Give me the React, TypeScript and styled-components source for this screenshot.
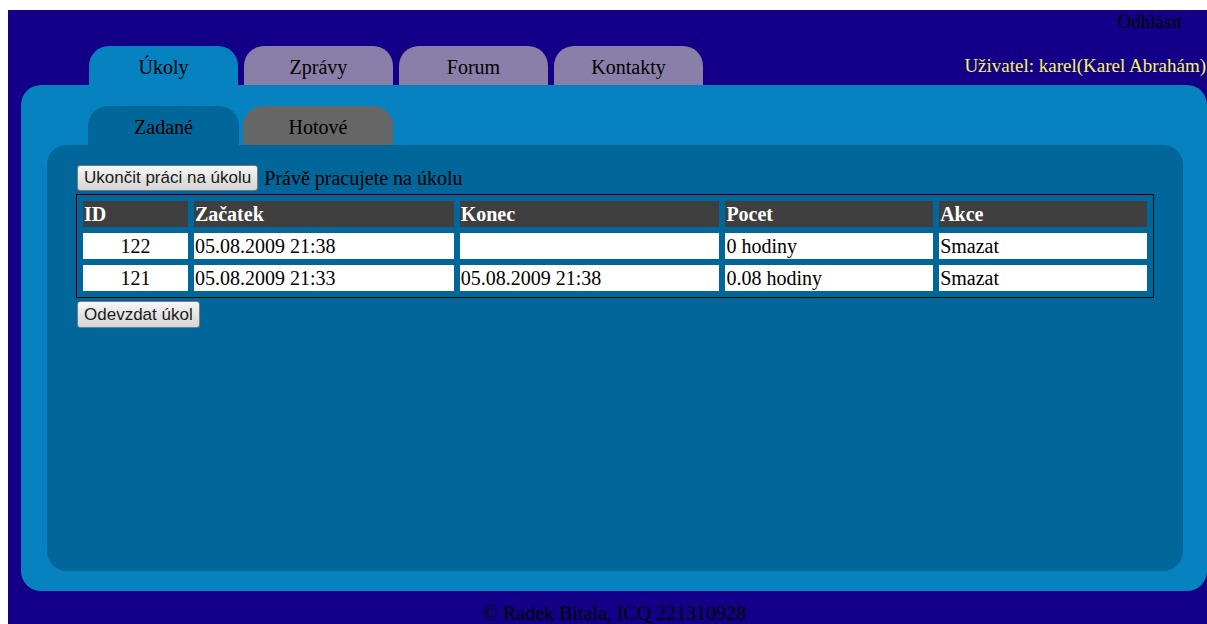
import React from 'react';
import styled, { createGlobalStyle } from 'styled-components';

const GlobalStyle = createGlobalStyle`
  html, body {
    overflow: hidden;
  }
  body {
    margin: 10px 0 0 8px;
    font-family: "Liberation Serif", "Times New Roman", serif;
    font-size: 20px;
    color: #000;
  }
`;

const Page = styled.div`
  width: 1213px;
  min-height: 640px;
  background: #140088;
`;

const TopLinks = styled.div`
  display: flex;
  justify-content: flex-end;
  height: 36px;
  padding-right: 39px;
  font-size: 19px;
  line-height: 23px;
`;

const LogoutLink = styled.a`
  color: #000;
  text-decoration: none;
  cursor: pointer;
`;

const Header = styled.div`
  display: flex;
  height: 39px;
  padding: 0 15px 0 81px;
`;

const TabStrip = styled.nav<{ $indent?: number; $gap: number }>`
  display: flex;
  gap: ${p => p.$gap}px;
  padding-left: ${p => p.$indent ?? 0}px;
`;

const Tab = styled.div<{ $bg: string; $w: number }>`
  width: ${p => p.$w}px;
  height: 39px;
  box-sizing: border-box;
  padding-top: 10px;
  line-height: 23px;
  text-align: center;
  background: ${p => p.$bg};
  border-radius: 20px 20px 0 0;
  cursor: pointer;
`;

const UserInfo = styled.div`
  margin-left: auto;
  padding-top: 8px;
  font-size: 19px;
  line-height: 23px;
  color: #f4f45c;
  white-space: nowrap;
`;

const OuterPanel = styled.main`
  margin: 0 14px 0 13px;
  padding: 21px 24px 20px 26px;
  background: #0582bf;
  border-radius: 20px;
`;

const InnerPanel = styled.section`
  height: 426px;
  box-sizing: border-box;
  padding: 20px 29px;
  background: #016699;
  border-radius: 20px;
`;

const Toolbar = styled.div`
  display: flex;
  align-items: center;
  gap: 6px;
  line-height: 23px;
`;

const Button = styled.button<{ $height?: number }>`
  height: ${p => p.$height ?? 26}px;
  margin: 0 0 0 1px;
  padding: 0 6px;
  font-family: "Liberation Sans", Arial, sans-serif;
  font-size: 17px;
  color: #1a1a1a;
  background: linear-gradient(#f6f6f6, #e4e4e4 50%, #d6d6d6);
  border: 1px solid #7a7a7a;
  border-radius: 3px;
  cursor: pointer;
`;

const Table = styled.table`
  margin: 3px 0;
  border: 1px solid #000;
  border-collapse: separate;
  border-spacing: 6px;
`;

const Th = styled.th<{ $w: number }>`
  width: ${p => p.$w}px;
  height: 26px;
  padding: 0 1px;
  background: #3f3f3f;
  color: #fff;
  text-align: left;
  font-weight: bold;
`;

const Td = styled.td<{ $center?: boolean }>`
  height: 26px;
  padding: 0 1px;
  background: #fff;
  text-align: ${p => (p.$center ? 'center' : 'left')};
`;

const Footer = styled.footer`
  margin-top: 11px;
  text-align: center;
  line-height: 23px;
`;

const mainTabs = ['Úkoly', 'Zprávy', 'Forum', 'Kontakty'];

const columns = [
  { title: 'ID', width: 103 },
  { title: 'Začatek', width: 258 },
  { title: 'Konec', width: 258 },
  { title: 'Pocet', width: 206 },
  { title: 'Akce', width: 206 },
];

const rows = [
  { id: 122, start: '05.08.2009 21:38', end: '', hours: '0 hodiny' },
  { id: 121, start: '05.08.2009 21:33', end: '05.08.2009 21:38', hours: '0.08 hodiny' },
];

export default function App() {
  return (
    <>
      <GlobalStyle />
      <Page>
        <TopLinks>
          <LogoutLink>Odhlásit</LogoutLink>
        </TopLinks>

        <Header>
          <TabStrip $gap={6}>
            {mainTabs.map((t, i) => (
              <Tab key={t} $w={149} $bg={i === 0 ? '#0582bf' : '#8a7fa8'}>
                {t}
              </Tab>
            ))}
          </TabStrip>
          <UserInfo>Uživatel: karel(Karel Abrahám)</UserInfo>
        </Header>

        <OuterPanel>
          <TabStrip $indent={41} $gap={4}>
            <Tab $w={151} $bg="#016699">Zadané</Tab>
            <Tab $w={150} $bg="#666666">Hotové</Tab>
          </TabStrip>

          <InnerPanel>
            <Toolbar>
              <Button>Ukončit práci na úkolu</Button>
              <span>Právě pracujete na úkolu</span>
            </Toolbar>

            <Table>
              <thead>
                <tr>
                  {columns.map(c => (
                    <Th key={c.title} $w={c.width}>
                      {c.title}
                    </Th>
                  ))}
                </tr>
              </thead>
              <tbody>
                {rows.map(r => (
                  <tr key={r.id}>
                    <Td $center>{r.id}</Td>
                    <Td>{r.start}</Td>
                    <Td>{r.end}</Td>
                    <Td>{r.hours}</Td>
                    <Td>Smazat</Td>
                  </tr>
                ))}
              </tbody>
            </Table>

            <Button $height={27}>Odevzdat úkol</Button>
          </InnerPanel>
        </OuterPanel>

        <Footer>© Radek Bitala, ICQ 221310928</Footer>
      </Page>
    </>
  );
}
